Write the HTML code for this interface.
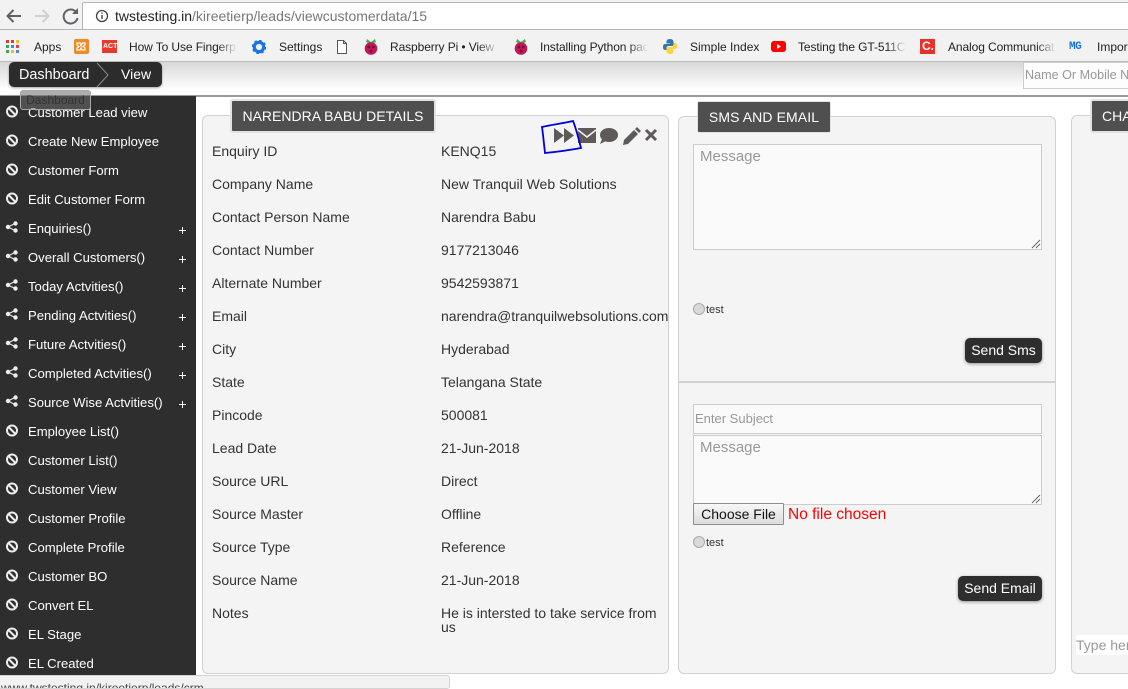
<!DOCTYPE html>
<html><head><meta charset="utf-8"><style>
html,body{margin:0;padding:0}
body{width:1128px;height:687px;overflow:hidden;position:relative;background:#fff;font-family:"Liberation Sans",Arial,sans-serif;font-size:14px;color:#333}
.a{position:absolute;white-space:nowrap}
.bm{position:absolute;top:39px;font-size:12px;line-height:16px;color:#222;white-space:nowrap;overflow:hidden}
.fd{-webkit-mask-image:linear-gradient(to right,#000 82%,transparent);mask-image:linear-gradient(to right,#000 82%,transparent);letter-spacing:-.1px}
.side{position:absolute;left:0;top:96px;width:196px;height:591px;background:#2e2e2e}
.it{position:absolute;left:28px;color:#fff;font-size:13.1px;line-height:16px;white-space:nowrap}
.panel{position:absolute;background:#f4f4f4;border:1px solid #d2d2d2;border-radius:6px;box-sizing:border-box}
.tt{position:absolute;background:#4f4f4f;color:#fff;font-size:14px;line-height:30px;height:30px;text-align:center;box-shadow:0 0 0 2px #e2e2e2;white-space:nowrap;border-radius:1px;overflow:hidden}
.l,.v{position:absolute;font-size:14px;line-height:14px;color:#333;white-space:nowrap}
.l{left:212px}.v{left:441px}
.ta{position:absolute;background:#fafafa;border:1px solid #ccc;box-sizing:border-box;color:#999;font-size:15px;padding-left:6px}
.btn{position:absolute;background:#2e2e2e;color:#fff;font-size:14px;border-radius:5px;text-align:center;box-shadow:0 1px 3px rgba(0,0,0,.4);height:25px;line-height:25px}
.radio{position:absolute;left:693px;width:10px;height:10px;border:1px solid #aaa;border-radius:50%;background:#d9d9d9}
.rt{position:absolute;left:706px;font-size:11px;line-height:12px;color:#333}
</style></head><body>

<div class="a" style="left:0;top:0;width:1128px;height:62px;background:#f2f2f2;border-bottom:1px solid #bdbdbd;box-sizing:border-box"></div>
<div class="a" style="left:82px;top:2px;width:1060px;height:28px;background:#fff;border:1px solid #b4b4b4;border-radius:2px;box-sizing:border-box"></div>
<div class="a" style="left:0;top:29px;width:1128px;height:1px;background:#b4b4b4"></div>
<svg class="a" style="left:0;top:0" width="90" height="30" fill="none">
<path d="M21 16H8M13.500 10 7.500 16l6 6" stroke="#5f6368" stroke-width="2"/>
<path d="M35 16H48M42.500 10 48.500 16l-6 6" stroke="#cfd0d2" stroke-width="2"/>
<path d="M76 12a7 7 0 1 0 1.500 6" stroke="#5f6368" stroke-width="2"/><path d="M78 8v6h-6z" fill="#5f6368"/>
</svg>
<svg class="a" style="left:95px;top:9px" width="14" height="14" fill="none"><circle cx="7" cy="7" r="5.500" stroke="#444" stroke-width="1.300"/><path d="M7 6v4M7 3.500v1.300" stroke="#444" stroke-width="1.400"/></svg>
<div class="a" style="left:115px;top:8px;font-size:14px;line-height:16px;color:#777"><span style="color:#222">twstesting.in</span>/kireetierp/leads/viewcustomerdata/15</div>

<svg class="a" style="left:6px;top:40px" width="14" height="14"><g><rect x="0" y="0" width="3" height="3" fill="#e53935"/><rect x="5" y="0" width="3" height="3" fill="#e53935"/><rect x="10" y="0" width="3" height="3" fill="#fbbc05"/><rect x="0" y="5" width="3" height="3" fill="#34a853"/><rect x="5" y="5" width="3" height="3" fill="#4285f4"/><rect x="10" y="5" width="3" height="3" fill="#ea4335"/><rect x="0" y="10" width="3" height="3" fill="#34a853"/><rect x="5" y="10" width="3" height="3" fill="#fbbc05"/><rect x="10" y="10" width="3" height="3" fill="#4285f4"/></g></svg>
<div class="bm" style="left:34px">Apps</div>
<svg class="a" style="left:74px;top:39px" width="15" height="15"><rect width="15" height="15" rx="2" fill="#f08a24"/><path d="M3 4h3l1 3 1-3h3v2l-2 1.500 2 1.500v2H8L7 9l-1 2H3V9l2-1.500L3 6z" fill="none" stroke="#fff" stroke-width="1.200"/></svg>
<svg class="a" style="left:102px;top:38px" width="15" height="16"><rect y="2" width="15" height="13" fill="#e8392c"/></svg>
<div class="a" style="left:103px;top:41px;font-size:7px;font-weight:bold;line-height:11px;color:#fff">ACT</div>
<div class="bm fd" style="left:129px;width:108px">How To Use Fingerp</div>
<svg class="a" style="left:252px;top:40px" width="14" height="14"><circle cx="7" cy="7" r="4.700" fill="none" stroke="#1a73e8" stroke-width="3.200"/><circle cx="7" cy="7" r="6.300" fill="none" stroke="#1a73e8" stroke-width="1.800" stroke-dasharray="2.500 2.450"/></svg>
<div class="bm" style="left:279px">Settings</div>
<svg class="a" style="left:336px;top:40px" width="12" height="14" fill="#fff" stroke="#555"><path d="M1.500.500h6l3 3v10h-9zM7.500.500v3h3"/></svg>
<svg class="a" style="left:364px;top:39px" width="14" height="16"><path d="M3 0l4 3 4-3 1 3-2 1H4L2 3z" fill="#4caf50"/><circle cx="7" cy="9.500" r="6.300" fill="#c2185b"/><circle cx="4.800" cy="8" r="1.500" fill="#7a0e3a"/><circle cx="9.200" cy="8" r="1.500" fill="#7a0e3a"/><circle cx="7" cy="12" r="1.500" fill="#7a0e3a"/></svg>
<div class="bm fd" style="left:390px;width:108px">Raspberry Pi • View t</div>
<svg class="a" style="left:514px;top:39px" width="14" height="16"><path d="M3 0l4 3 4-3 1 3-2 1H4L2 3z" fill="#4caf50"/><circle cx="7" cy="9.500" r="6.300" fill="#c2185b"/><circle cx="4.800" cy="8" r="1.500" fill="#7a0e3a"/><circle cx="9.200" cy="8" r="1.500" fill="#7a0e3a"/><circle cx="7" cy="12" r="1.500" fill="#7a0e3a"/></svg>
<div class="bm fd" style="left:540px;width:108px">Installing Python pac</div>
<svg class="a" style="left:662px;top:38px" width="16" height="17"><path d="M8 1C5 1 4.500 2.500 4.500 4v1.500H8V6H3C1.500 6 1 7.500 1 9s.5 3 2 3h1.500v-2C4.500 8.500 5.500 8 7 8h3c1 0 1.500-1 1.500-1.500V4C11.500 2 10 1 8 1z" fill="#3776ab"/><path d="M8 16c3 0 3.500-1.500 3.500-3v-1.500H8V11h5c1.500 0 2-1.500 2-3s-.5-3-2-3h-1.500v2c0 1.500-1 2-2.500 2H6c-1 0-1.500 1-1.500 1.500V13C4.500 15 6 16 8 16z" fill="#ffd43b"/></svg>
<div class="bm" style="left:690px">Simple Index</div>
<svg class="a" style="left:771px;top:41px" width="15" height="11"><rect width="15" height="11" rx="3" fill="#f00"/><path d="M6 3l4 2.500L6 8z" fill="#fff"/></svg>
<div class="bm fd" style="left:798px;width:108px">Testing the GT-511C</div>
<svg class="a" style="left:920px;top:39px" width="15" height="15"><rect width="15" height="15" fill="#e8312a"/></svg>
<div class="a" style="left:922px;top:39px;font-size:12px;font-weight:bold;line-height:15px;color:#fff">C.</div>
<div class="bm fd" style="left:948px;width:108px">Analog Communicat</div>
<div class="a" style="left:1069px;top:41px;font-family:'Liberation Mono',monospace;font-size:11px;font-weight:bold;line-height:12px;color:#1a73e8;letter-spacing:-.5px">MG</div>
<div class="bm" style="left:1097px">Import</div>

<div class="a" style="left:0;top:62px;width:1128px;height:33px;background:linear-gradient(#d8d8d8,#fdfdfd 80%);border-bottom:2px solid #9a9a9a;box-sizing:content-box"></div>
<div class="a" style="left:9px;top:62px;width:153px;height:25px;background:#2c2c2c;border-radius:5px;box-shadow:0 1px 2px rgba(0,0,0,.35)"></div>
<div class="a" style="left:19px;top:67px;font-size:14.4px;line-height:16px;color:#fff">Dashboard</div>
<div class="a" style="left:121px;top:66px;font-size:14px;line-height:16px;color:#fff">View</div>
<svg class="a" style="left:96px;top:62px" width="16" height="25" fill="none"><path d="M1 1l11 12L1 25" stroke="#8a8a8a"/></svg>
<div class="a" style="left:1023px;top:62px;width:110px;height:27px;background:#fdfdfd;border:1px solid #ccc;box-sizing:border-box;font-size:12.600px;line-height:24px;color:#999;padding-left:1px;overflow:hidden">Name Or Mobile N</div>

<div class="side" id="s">
<div class="it" style="top:9px">Customer Lead view</div>
<div class="it" style="top:38px">Create New Employee</div>
<div class="it" style="top:67px">Customer Form</div>
<div class="it" style="top:96px">Edit Customer Form</div>
<div class="it" style="top:125px">Enquiries()</div>
<div class="it" style="top:154px">Overall Customers()</div>
<div class="it" style="top:183px">Today Actvities()</div>
<div class="it" style="top:212px">Pending Actvities()</div>
<div class="it" style="top:241px">Future Actvities()</div>
<div class="it" style="top:270px">Completed Actvities()</div>
<div class="it" style="top:299px">Source Wise Actvities()</div>
<div class="it" style="top:328px">Employee List()</div>
<div class="it" style="top:357px">Customer List()</div>
<div class="it" style="top:386px">Customer View</div>
<div class="it" style="top:415px">Customer Profile</div>
<div class="it" style="top:444px">Complete Profile</div>
<div class="it" style="top:473px">Customer BO</div>
<div class="it" style="top:502px">Convert EL</div>
<div class="it" style="top:531px">EL Stage</div>
<div class="it" style="top:560px">EL Created</div>
<svg style="position:absolute;left:0;top:0" width="196" height="591" fill="none">
<defs>
<g id="ban" stroke="#eee" stroke-width="2"><circle cx="12" cy="15.500" r="5"/><path d="M8.500 12l7 7"/></g>
<g id="sh" fill="#eee" stroke="#eee"><circle cx="8" cy="15" r="2.200" stroke="none"/><circle cx="15.500" cy="11.500" r="2.200" stroke="none"/><circle cx="15.500" cy="18.500" r="2.200" stroke="none"/><path d="M8 15l7-3.500M8 15l7 3.500"/></g>
</defs>
<use href="#ban" y="0"/><use href="#ban" y="29"/><use href="#ban" y="58"/><use href="#ban" y="87"/>
<use href="#sh" y="116"/><use href="#sh" y="145"/><use href="#sh" y="174"/><use href="#sh" y="203"/><use href="#sh" y="232"/><use href="#sh" y="261"/><use href="#sh" y="290"/>
<use href="#ban" y="319"/><use href="#ban" y="348"/><use href="#ban" y="377"/><use href="#ban" y="406"/><use href="#ban" y="435"/><use href="#ban" y="464"/><use href="#ban" y="493"/><use href="#ban" y="522"/><use href="#ban" y="551"/>
<g stroke="#fff" stroke-width="1"><path d="M179 134.500h7M182.500 131v7"/><path d="M179 163.500h7M182.500 160v7"/><path d="M179 192.500h7M182.500 189v7"/><path d="M179 221.500h7M182.500 218v7"/><path d="M179 250.500h7M182.500 247v7"/><path d="M179 279.500h7M182.500 276v7"/><path d="M179 308.500h7M182.500 305v7"/></g>
</svg>
</div>

<div class="a" style="left:20px;top:90px;width:71px;height:20px;background:rgba(110,110,110,.55);border:1px solid #aaa;border-radius:3px;box-sizing:border-box;font-size:12px;line-height:18px;text-align:center;color:#333">Dashboard</div>

<div class="panel" style="left:202px;top:115px;width:467px;height:559px"></div>
<div class="tt" style="left:232px;top:101px;width:202px">NARENDRA BABU DETAILS</div>
<div class="l" style="top:144px">Enquiry ID</div><div class="v" style="top:144px">KENQ15</div>
<div class="l" style="top:177px">Company Name</div><div class="v" style="top:177px">New Tranquil Web Solutions</div>
<div class="l" style="top:210px">Contact Person Name</div><div class="v" style="top:210px">Narendra Babu</div>
<div class="l" style="top:243px">Contact Number</div><div class="v" style="top:243px">9177213046</div>
<div class="l" style="top:276px">Alternate Number</div><div class="v" style="top:276px">9542593871</div>
<div class="l" style="top:309px">Email</div><div class="v" style="top:309px">narendra@tranquilwebsolutions.com</div>
<div class="l" style="top:342px">City</div><div class="v" style="top:342px">Hyderabad</div>
<div class="l" style="top:375px">State</div><div class="v" style="top:375px">Telangana State</div>
<div class="l" style="top:408px">Pincode</div><div class="v" style="top:408px">500081</div>
<div class="l" style="top:441px">Lead Date</div><div class="v" style="top:441px">21-Jun-2018</div>
<div class="l" style="top:474px">Source URL</div><div class="v" style="top:474px">Direct</div>
<div class="l" style="top:507px">Source Master</div><div class="v" style="top:507px">Offline</div>
<div class="l" style="top:540px">Source Type</div><div class="v" style="top:540px">Reference</div>
<div class="l" style="top:573px">Source Name</div><div class="v" style="top:573px">21-Jun-2018</div>
<div class="l" style="top:606px">Notes</div><div class="v" style="top:606px">He is intersted to take service from<br>us</div>

<svg class="a" style="left:535px;top:120px" width="130" height="36" fill="none">
<path d="M19 8 29 15.500 19 23zM29 8l10 7.500L29 23z" fill="#5e5a5a"/>
<rect x="43" y="8" width="18" height="15" fill="#5e5a5a"/><path d="M43 10l9 7 9-7" stroke="#f4f4f4" stroke-width="1.500"/>
<ellipse cx="74" cy="15" rx="9" ry="7" fill="#5e5a5a"/><path d="M67 19l-2 5 6-3z" fill="#5e5a5a"/>
<path d="M88 25l1-5 10-10 4 4-10 10z" fill="#5e5a5a"/><path d="M100 9l2-2 4 4-2 2z" fill="#5e5a5a"/>
<path d="M111 10l10 10M121 10 111 20" stroke="#5e5a5a" stroke-width="3"/>
<path d="M7 7C15 5 30 3 38 1 41 8 44 20 46 28 35 30 21 32 10 33 9 24 8 14 7 7Z" stroke="#0000dc" stroke-width="1.800"/>
</svg>

<div class="panel" style="left:678px;top:116px;width:378px;height:558px"></div>
<div class="tt" style="left:698px;top:102px;width:132px;box-shadow:0 0 0 1px #e2e2e2;letter-spacing:.1px">SMS AND EMAIL</div>
<div class="ta" style="left:693px;top:144px;width:349px;height:106px;line-height:24px">Message</div>
<svg class="a" style="left:1031px;top:239px" width="10" height="10" stroke="#666"><path d="M1 9 9 1M5 9 9 5"/></svg>
<div class="radio" style="top:303px"></div><div class="rt" style="top:304px">test</div>
<div class="btn" style="left:965px;top:338px;width:77px">Send Sms</div>
<div class="a" style="left:679px;top:381px;width:376px;height:2px;background:#d2d2d2"></div>
<div class="ta" style="left:693px;top:404px;width:349px;height:30px;line-height:28px;font-size:13px;padding-left:1px">Enter Subject</div>
<div class="ta" style="left:693px;top:435px;width:349px;height:70px;line-height:24px">Message</div>
<svg class="a" style="left:1031px;top:494px" width="10" height="10" stroke="#666"><path d="M1 9 9 1M5 9 9 5"/></svg>
<div class="a" style="left:693px;top:503px;width:91px;height:22px;background:linear-gradient(#f8f8f8,#dcdcdc);border:1px solid #8e8e8e;border-radius:1px;box-sizing:border-box;font-size:14px;line-height:20px;text-align:center;color:#111">Choose File</div>
<div class="a" style="left:788px;top:506px;font-size:15.500px;line-height:18px;color:#f00">No file chosen</div>
<div class="radio" style="top:536px"></div><div class="rt" style="top:537px">test</div>
<div class="btn" style="left:958px;top:576px;width:84px">Send Email</div>

<div class="panel" style="left:1071px;top:115px;width:90px;height:559px"></div>
<div class="tt" style="left:1092px;top:101px;width:60px;text-align:left;padding-left:10px">CHAT</div>
<div class="a" style="left:1076px;top:635px;width:60px;height:20px;background:#fff;font-size:14px;line-height:20px;color:#999;overflow:hidden">Type here</div>

<div class="a" style="left:-5px;top:675px;width:455px;height:14px;background:#f2f2f2;border:1px solid #d4d4d4;border-radius:3px;box-sizing:border-box;font-size:12px;line-height:24px;color:#444;padding-left:5px;overflow:hidden">www.twstesting.in/kireetierp/leads/crm</div>
</body></html>
